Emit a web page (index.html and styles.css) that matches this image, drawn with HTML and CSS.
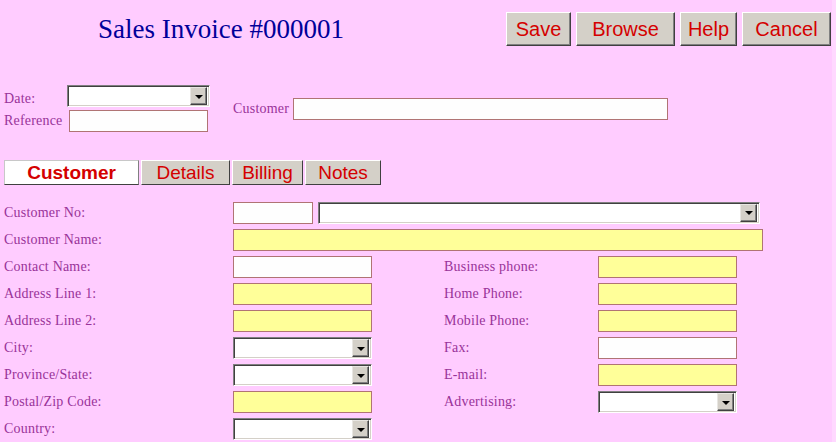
FILE: index.html
```html
<!DOCTYPE html>
<html lang="en">
<head>
    <meta charset="UTF-8">
    <meta name="viewport" content="width=device-width, initial-scale=1.0">
    <title>Sales Invoice</title>
    <link rel="stylesheet" href="styles.css">
</head>
<body>
    <div class="header">
        <h1 class="title">Sales Invoice #000001</h1>
        <div class="toolbar">
            <button class="tool-btn btn-save">Save</button>
            <button class="tool-btn btn-browse">Browse</button>
            <button class="tool-btn btn-help">Help</button>
            <button class="tool-btn btn-cancel">Cancel</button>
        </div>
    </div>

    <!-- Invoice header fields -->
    <div class="top-fields">
        <div class="date-ref">
            <label class="lbl lbl-date">Date:</label>
            <div class="combo combo-date">
                <select class="combo-field"></select>
                <span class="combo-btn"><span class="arrow"></span></span>
            </div>
            <label class="lbl">Reference</label>
            <input type="text" class="field field-ref">
        </div>
        <label class="lbl lbl-customer">Customer</label>
        <input type="text" class="field field-customer">
    </div>

    <div class="tabs">
        <div class="tab tab-active tab-customer">Customer</div>
        <div class="tab tab-details">Details</div>
        <div class="tab tab-billing">Billing</div>
        <div class="tab tab-notes">Notes</div>
    </div>

    <!-- Customer tab -->
    <div class="form">
        <label class="lbl">Customer No:</label>
        <div class="wide">
            <input type="text" class="field field-no">
            <div class="combo combo-customer">
                <select class="combo-field"></select>
                <span class="combo-btn"><span class="arrow"></span></span>
            </div>
        </div>

        <label class="lbl">Customer Name:</label>
        <div class="wide">
            <input type="text" class="field field-name req">
        </div>

        <label class="lbl">Contact Name:</label>
        <input type="text" class="field field-sm">
        <label class="lbl">Business phone:</label>
        <input type="text" class="field field-sm req">

        <label class="lbl">Address Line 1:</label>
        <input type="text" class="field field-sm req">
        <label class="lbl">Home Phone:</label>
        <input type="text" class="field field-sm req">

        <label class="lbl">Address Line 2:</label>
        <input type="text" class="field field-sm req">
        <label class="lbl">Mobile Phone:</label>
        <input type="text" class="field field-sm req">

        <label class="lbl">City:</label>
        <div class="combo combo-sm">
            <select class="combo-field"></select>
            <span class="combo-btn"><span class="arrow"></span></span>
        </div>
        <label class="lbl">Fax:</label>
        <input type="text" class="field field-sm">

        <label class="lbl">Province/State:</label>
        <div class="combo combo-sm">
            <select class="combo-field"></select>
            <span class="combo-btn"><span class="arrow"></span></span>
        </div>
        <label class="lbl">E-mail:</label>
        <input type="text" class="field field-sm req">

        <label class="lbl">Postal/Zip Code:</label>
        <input type="text" class="field field-sm req">
        <label class="lbl">Advertising:</label>
        <div class="combo combo-sm">
            <select class="combo-field"></select>
            <span class="combo-btn"><span class="arrow"></span></span>
        </div>

        <label class="lbl">Country:</label>
        <div class="combo combo-sm">
            <select class="combo-field"></select>
            <span class="combo-btn"><span class="arrow"></span></span>
        </div>
    </div>
</body>
</html>
```

FILE: styles.css
```css
body {
    margin: 0;
    background-color: #ffccff;
    font-family: "Liberation Serif", "Times New Roman", serif;
    border-right: 4px solid #ffd8ff;
    height: 442px;
    box-sizing: border-box;
    overflow: hidden;
}
.header {
    display: flex;
    align-items: flex-start;
    padding-top: 12px;
    height: 34px;
}
.title {
    margin: 2px 0 0 98px;
    font-size: 27px;
    font-weight: normal;
    line-height: 30px;
    color: #000099;
    white-space: nowrap;
}
.toolbar {
    display: flex;
    gap: 5px;
    margin-left: auto;
    margin-right: 1px;
}
.tool-btn {
    height: 34px;
    padding: 0;
    font-family: "Liberation Sans", Arial, sans-serif;
    font-size: 20px;
    color: #d40000;
    background-color: #d4d0c8;
    border: 1px solid;
    border-color: #ffffff #404040 #404040 #ffffff;
    box-shadow: inset -1px -1px #808080;
    cursor: pointer;
}
.btn-save { width: 65px; }
.btn-browse { width: 99px; }
.btn-help { width: 57px; }
.btn-cancel { width: 89px; }

.lbl {
    font-size: 14px;
    letter-spacing: 0.2px;
    color: #993399;
    white-space: nowrap;
}
.field {
    box-sizing: border-box;
    height: 22px;
    margin: 0;
    padding: 0 2px;
    border: 1px solid #b07474;
    background-color: #fefefe;
    font-family: inherit;
}
.field.req { background-color: #ffff99; }

.combo {
    box-sizing: border-box;
    display: flex;
    align-items: center;
    height: 22px;
    background-color: #ffffff;
    border: 1px solid;
    border-color: #808080 #ffffff #ffffff #808080;
    box-shadow: inset 1px 1px #404040, inset -1px -1px #d4d0c8;
    padding: 2px;
}
.combo-field {
    flex: 1;
    min-width: 0;
    height: 100%;
    border: none;
    background: transparent;
    appearance: none;
    outline: none;
}
.combo-btn {
    box-sizing: border-box;
    width: 17px;
    height: 18px;
    display: flex;
    align-items: center;
    justify-content: center;
    background-color: #d4d0c8;
    border: 1px solid;
    border-color: #e8e6e2 #404040 #404040 #e8e6e2;
    box-shadow: inset -1px -1px #808080;
}
.arrow {
    width: 0;
    height: 0;
    border-left: 4px solid transparent;
    border-right: 4px solid transparent;
    border-top: 4px solid #000000;
    margin-top: 1px;
}

.top-fields {
    display: flex;
    align-items: center;
    margin-top: 39px;
    padding-left: 4px;
}
.date-ref {
    display: grid;
    grid-template-columns: 63px auto;
    align-items: center;
    row-gap: 3px;
}
.lbl-date { padding-top: 5px; }
.combo-date { width: 143px; }
.field-ref {
    width: 139px;
    margin-left: 2px;
}
.lbl-customer { margin-left: 23px; }
.field-customer {
    width: 375px;
    margin-left: 4px;
}

.tabs {
    display: flex;
    gap: 2px;
    margin-top: 28px;
    padding-left: 4px;
}
.tab {
    box-sizing: border-box;
    height: 25px;
    line-height: 23px;
    text-align: center;
    font-family: "Liberation Sans", Arial, sans-serif;
    font-size: 19px;
    color: #d40000;
    background-color: #d4d0c8;
    border: 1px solid;
    border-color: #ffffff #404040 #404040 #ffffff;
    cursor: pointer;
}
.tab-active {
    background-color: #ffffff;
    font-weight: bold;
    border-color: #c8c8c8 #808080 #404040 #c8c8c8;
}
.tab-customer { width: 135px; }
.tab-details { width: 89px; }
.tab-billing { width: 71px; }
.tab-notes { width: 76px; }

.form {
    display: grid;
    grid-template-columns: 229px 211px 154px 1fr;
    grid-auto-rows: 22px;
    row-gap: 5px;
    align-items: center;
    margin-top: 17px;
    padding-left: 4px;
}
.wide {
    grid-column: 2 / -1;
    display: flex;
    align-items: center;
    gap: 5px;
}
.field-no { width: 80px; }
.combo-customer {
    width: 442px;
    margin-top: -1px;
}
.field-name { width: 530px; }
.field-sm { width: 139px; }
.combo-sm { width: 139px; }
```
